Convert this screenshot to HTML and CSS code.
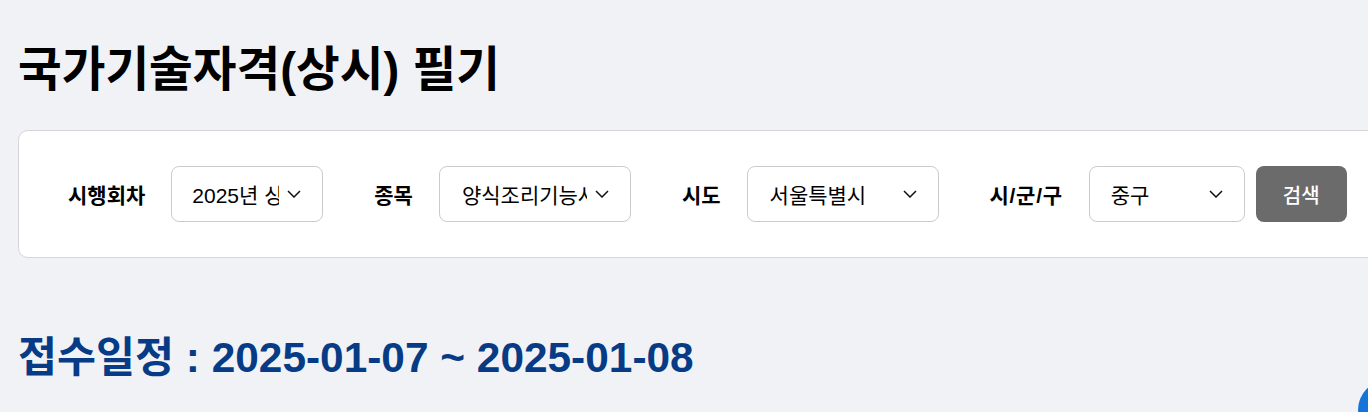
FILE: index.html
```html
<!DOCTYPE html>
<html lang="ko">
<head>
<meta charset="utf-8">
<link rel="stylesheet" href="styles.css">
</head>
<body>
<main class="page">
  <h1 class="title">국가기술자격(상시) 필기</h1>
  <section class="filter">
    <div class="field">
      <span class="label">시행회차</span>
      <div class="select s1"><span class="val">2025년 상시</span><svg class="chev" viewBox="0 0 14 8"><path d="M1 1l6 6 6-6"/></svg></div>
    </div>
    <div class="field">
      <span class="label">종목</span>
      <div class="select s2"><span class="val">양식조리기능사</span><svg class="chev" viewBox="0 0 14 8"><path d="M1 1l6 6 6-6"/></svg></div>
    </div>
    <div class="field">
      <span class="label">시도</span>
      <div class="select s3"><span class="val">서울특별시</span><svg class="chev" viewBox="0 0 14 8"><path d="M1 1l6 6 6-6"/></svg></div>
    </div>
    <div class="field">
      <span class="label label-wide">시/군/구</span>
      <div class="select s4"><span class="val">중구</span><svg class="chev" viewBox="0 0 14 8"><path d="M1 1l6 6 6-6"/></svg></div>
      <button class="btn">검색</button>
    </div>
  </section>
  <h2 class="period">접수일정 : 2025-01-07 ~ 2025-01-08</h2>
</main>
<div class="fab"></div>
</body>
</html>
```
FILE: styles.css
```css
html, body {
  margin: 0;
  padding: 0;
  background: #f1f2f6;
  overflow: hidden;
}
body {
  font-family: "Liberation Sans", "Noto Sans CJK KR", sans-serif;
  color: #000;
}
.page {
  padding: 0 0 0 18px;
  width: 1400px;
}
.title {
  margin: 0 0 30px;
  padding-top: 40px;
  font-size: 47.5px;
  font-weight: 700;
  line-height: 60px;
}
.filter {
  display: flex;
  align-items: center;
  background: #fff;
  border: 1px solid #d6d6da;
  border-radius: 10px;
  height: 128px;
  box-sizing: border-box;
  padding: 0 0 0 49px;
  gap: 51px;
}
.field {
  display: flex;
  align-items: center;
  gap: 26px;
}
.label {
  font-size: 21px;
  font-weight: 700;
  white-space: nowrap;
}
.label-wide {
  letter-spacing: 0.7px;
}
.select {
  display: flex;
  align-items: center;
  height: 56px;
  box-sizing: border-box;
  border: 1px solid #cbcbcf;
  border-radius: 8px;
  background: #fff;
  padding: 0 21px 0 21px;
  font-size: 21px;
}
.val {
  flex: 1;
  overflow: hidden;
  white-space: nowrap;
}
.chev {
  width: 14px;
  height: 8px;
  fill: none;
  stroke: #111;
  stroke-width: 1.5;
  margin-left: 8px;
  flex: none;
}
.s1 { width: 152px; padding-left: 20px; }
.s2 { width: 192px; padding-left: 22px; }
.s3 { width: 192px; padding-left: 22px; }
.s4 { width: 156px; }
.btn {
  margin-left: -15px;
  width: 91px;
  height: 56px;
  border: none;
  border-radius: 8px;
  background: #6b6b6b;
  color: #fff;
  font-family: inherit;
  font-size: 20px;
  font-weight: 500;
}
.period {
  margin: 0;
  padding-top: 75px;
  font-size: 42.4px;
  font-weight: 700;
  color: #073b86;
  line-height: 50px;
}
.fab {
  position: fixed;
  left: 1358px;
  top: 380px;
  width: 60px;
  height: 60px;
  border-radius: 50%;
  background: #1673d8;
}
```
